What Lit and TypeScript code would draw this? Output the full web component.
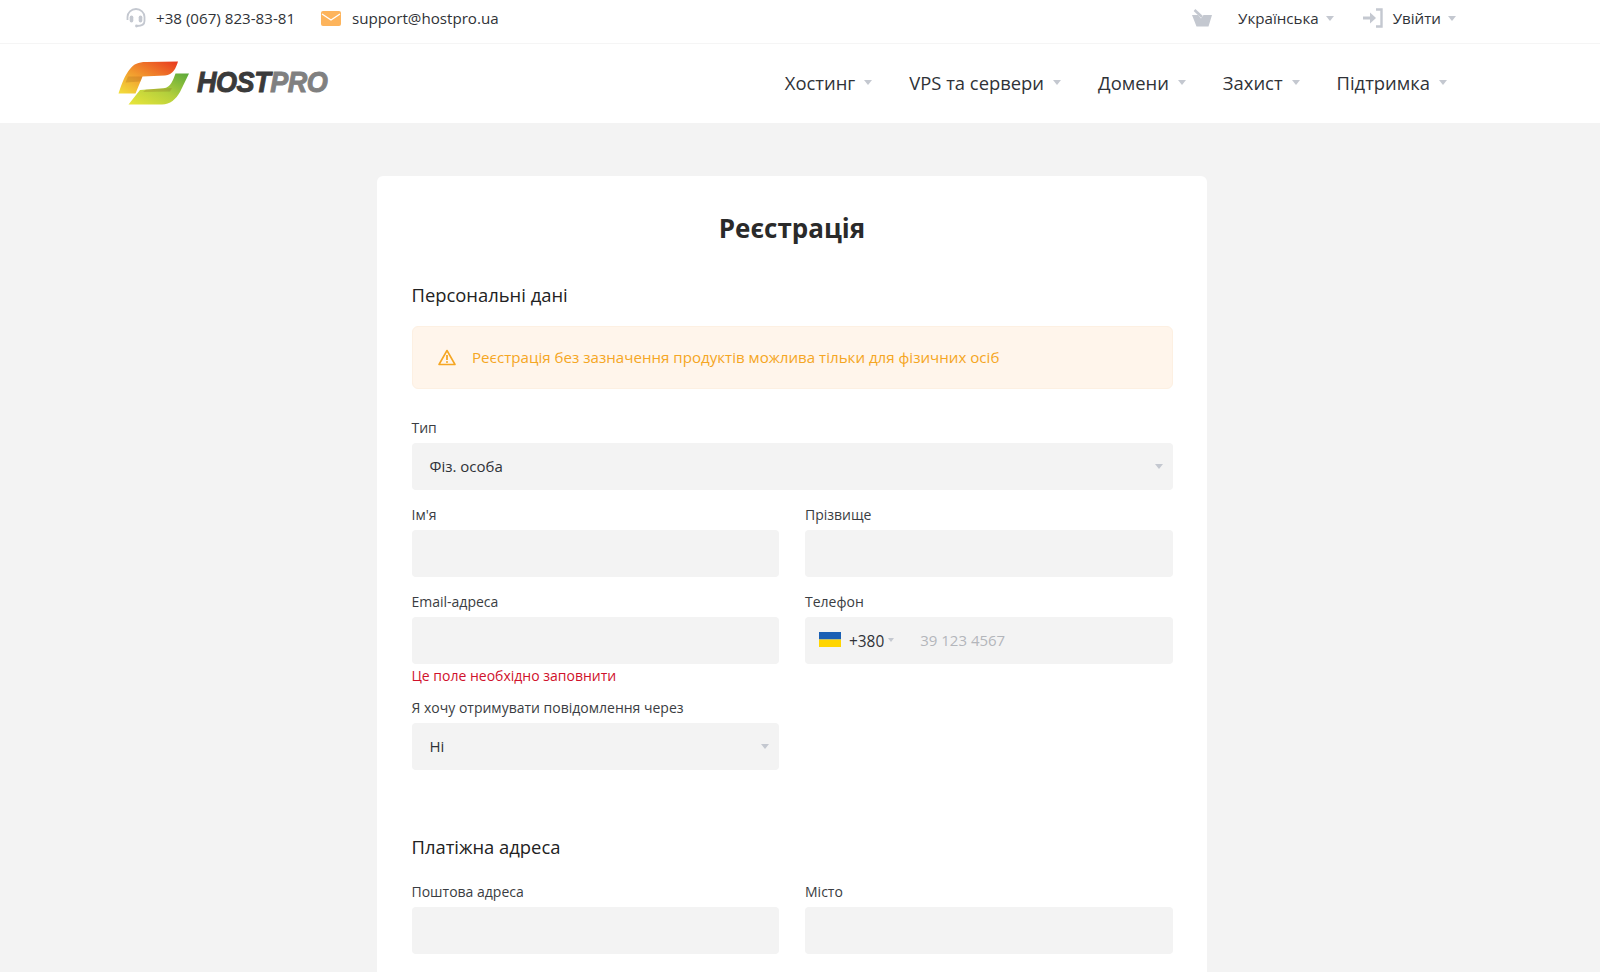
import { LitElement, html, css, svg } from "lit";
import { customElement } from "lit/decorators.js";

const caret = html`<span class="caret"></span>`;

@customElement("app-root")
export class AppRoot extends LitElement {
  static styles = css`
    :host { display: block; height: 972px; overflow: hidden; background: #f3f3f3; font-family: "Open Sans", sans-serif; color: #2f3237; }
    * { box-sizing: border-box; }
    .top { height: 44px; background: #fff; border-bottom: 1px solid #f5f5f5; display: flex; align-items: center; justify-content: space-between; padding: 0 144px 7px 126px; font-size: 15.15px; line-height: 20px; }
    .group { display: flex; align-items: center; }
    .top svg { display: block; flex: none; }
    .phone { margin: 0 26px 0 10px; }
    .mail { margin-left: 11px; }
    .lang { margin-left: 26px; }
    .login { margin: 0 0 0 10px; }
    .caret { display: inline-block; width: 0; height: 0; border-left: 4.5px solid transparent; border-right: 4.5px solid transparent; border-top: 5px solid #c4c8d0; }
    .top .caret { margin-left: 7px; }
    .login-icon { margin-left: 29px; }
    .head { height: 79px; background: #fff; display: flex; align-items: center; justify-content: space-between; padding: 0 153px 2px 118px; }
    .logo { display: flex; align-items: center; height: 44px; }
    .word { display: inline-block; transform: scaleX(0.9); transform-origin: left center; font-family: "Liberation Sans", sans-serif; font-weight: 700; font-style: italic; font-size: 30px; line-height: 34px; margin: -2px -20px 0 7px; letter-spacing: -0.5px; color: #3a3a3a; -webkit-text-stroke: 1px currentColor; }
    .word span { color: #808080; }
    nav { display: flex; gap: 37px; font-size: 18.4px; line-height: 24px; }
    nav a { display: flex; align-items: center; }
    nav .caret { margin-left: 9px; }
    .wrap { padding-right: 16px; }
    .card { width: 830px; margin: 53px auto 0; background: #fff; border-radius: 6px; padding: 32px 34.5px 40px; }
    h1 { margin: 0; font-size: 26px; line-height: 40px; font-weight: 700; text-align: center; color: #2a2a2a; }
    h2 { margin: 0; font-size: 18.4px; line-height: 24px; font-weight: 400; color: #222; }
    .personal { margin-top: 35px; }
    .alert { margin-top: 19px; height: 63px; background: #fff5eb; border: 1px solid #fdf0e2; border-radius: 6px; display: flex; align-items: center; padding: 0 0 1px 25.5px; gap: 16px; color: #f5a623; font-size: 15.12px; }
    .grid { display: grid; grid-template-columns: 1fr 1fr; column-gap: 26px; }
    .full { grid-column: 1 / -1; }
    .field { display: flex; flex-direction: column; margin-top: 15px; }
    .field.first { margin-top: 29px; }
    .field.after-err { margin-top: 0; }
    label { font-size: 14px; line-height: 20px; height: 20px; margin-bottom: 5px; color: #3a3d42; }
    .box { height: 47px; background: #f3f3f3; border-radius: 4px; display: flex; align-items: center; padding: 0 18px 2px; font-size: 15px; position: relative; color: #2f3237; }
    .box .caret { position: absolute; right: 10px; top: 21px; }
    .err { color: #d0112b; font-size: 14px; line-height: 20px; margin-top: 2px; height: 32px; }
    .tel { padding-left: 14px; }
    .flag { width: 22px; height: 15px; display: block; flex: none; }
    .code { font-size: 15.4px; margin-left: 8px; margin-top: 4px; }
    .tel .caret { position: static; border-left-width: 3.5px; border-right-width: 3.5px; border-top-width: 4px; margin: 0 0 0 4px; }
    .ph { color: #b3b6bb; margin-left: 26px; }
    .billing { margin-top: 65px; }
    .billing-grid .field { margin-top: 23px; }
  `;

  field(label: string, cls = "") {
    return html`<div class="field ${cls}"><label>${label}</label><div class="box"></div></div>`;
  }

  render() {
    const logo = svg`<svg width="72" height="44" viewBox="0 0 72 44">
      <defs>
        <linearGradient id="o" x1="0" y1="1" x2="1" y2="0"><stop offset="0" stop-color="#f2e03c"/><stop offset=".45" stop-color="#f29a2e"/><stop offset="1" stop-color="#e8371f"/></linearGradient>
        <linearGradient id="g" x1="0" y1="1" x2="1" y2="0"><stop offset="0" stop-color="#eae63a"/><stop offset=".5" stop-color="#b3cf3c"/><stop offset="1" stop-color="#5aa83a"/></linearGradient>
      </defs>
      <path d="M0.5 32.5 C4 22 7 14 12 8 C16 3 20 1 28 1 L60 0.5 C58 7 55 14 47 14.5 L24.5 15.5 L17.5 32.5Z" fill="url(#o)"/>
      <path d="M71 12.5 L57.5 12.5 C55 19 53 26.5 45.5 27.3 L22 29 L10.5 43.5 L44 43.5 C52 43.5 58 38 62 31Z" fill="url(#g)"/>
      <path d="M10 15.5 L24.5 15.5 L22.5 20.5 L7.5 21.5Z M28 28.5 L54 27 L52 30.5 L25 31Z" fill="#7a3b10" opacity=".18"/>
    </svg>`;
    return html`
      <div class="top">
        <div class="group">
          <svg width="20" height="20" viewBox="0 0 20 20" fill="none"><path d="M1.5 12 V9 a8.5 8 0 0 1 17 0 V13 C18.5 16.5 15 18 11 18" stroke="#c4c8d0" stroke-width="1.8"/><rect x="3.7" y="7.5" width="3.6" height="7" rx="1.8" fill="#c4c8d0"/><rect x="12.7" y="7.5" width="3.6" height="7" rx="1.8" fill="#c4c8d0"/><circle cx="10.5" cy="18" r="1.4" fill="#c4c8d0"/></svg>
          <span class="phone">+38 (067) 823-83-81</span>
          <svg width="20" height="15" viewBox="0 0 20 15"><rect width="20" height="15" rx="2" fill="#fdb45c"/><path d="M1 3 L10 9 L19 3" fill="none" stroke="#fff" stroke-width="1.3"/></svg>
          <span class="mail">support@hostpro.ua</span>
        </div>
        <div class="group">
          <svg width="20" height="18" viewBox="0 0 20 18"><path d="M0 6 H6 L9 9.5 L11.5 6 H20 L16.5 17.5 H4.5Z" fill="#c4c8d0"/><path d="M2.5 1 L10 8" stroke="#c4c8d0" stroke-width="2.6" fill="none"/></svg>
          <span class="lang">Українська</span>${caret}
          <svg class="login-icon" width="20" height="20" viewBox="0 0 20 20" fill="none"><path d="M0 10 H9" stroke="#c4c8d0" stroke-width="3"/><path d="M7 4.5 L13 10 L7 15.5Z" fill="#c4c8d0"/><path d="M13 1.5 H18.5 V18.5 H13" stroke="#c4c8d0" stroke-width="2.4"/></svg>
          <span class="login">Увійти</span>${caret}
        </div>
      </div>
      <div class="head">
        <div class="logo">${logo}<span class="word">HOST<span>PRO</span></span></div>
        <nav>
          <a>Хостинг${caret}</a><a>VPS та сервери${caret}</a><a>Домени${caret}</a><a>Захист${caret}</a><a>Підтримка${caret}</a>
        </nav>
      </div>
      <div class="wrap">
      <div class="card">
        <h1>Реєстрація</h1>
        <h2 class="personal">Персональні дані</h2>
        <div class="alert">
          <svg width="18" height="17" viewBox="0 0 18 17" fill="none"><path d="M9 1.5 L17 15.5 H1Z" stroke="#f5a623" stroke-width="1.6" stroke-linejoin="round"/><path d="M9 6 V11" stroke="#f5a623" stroke-width="1.8"/><circle cx="9" cy="13" r="1" fill="#f5a623"/></svg>
          <span>Реєстрація без зазначення продуктів можлива тільки для фізичних осіб</span>
        </div>
        <div class="grid">
          <div class="field first full"><label>Тип</label><div class="box">Фіз. особа${caret}</div></div>
          ${this.field("Ім'я")}
          ${this.field("Прізвище")}
          <div class="field"><label>Email-адреса</label><div class="box"></div><div class="err">Це поле необхідно заповнити</div></div>
          <div class="field"><label>Телефон</label>
            <div class="box tel">
              <svg class="flag" viewBox="0 0 22 15"><rect width="22" height="7.5" fill="#1a5fb4"/><rect y="7.5" width="22" height="7.5" fill="#ffd500"/></svg>
              <span class="code">+380</span>${caret}<span class="ph">39 123 4567</span>
            </div>
          </div>
          <div class="field after-err"><label>Я хочу отримувати повідомлення через</label><div class="box">Ні${caret}</div></div>
        </div>
        <h2 class="billing">Платіжна адреса</h2>
        <div class="grid billing-grid">
          ${this.field("Поштова адреса")}
          ${this.field("Місто")}
        </div>
      </div>
      </div>
    `;
  }
}
